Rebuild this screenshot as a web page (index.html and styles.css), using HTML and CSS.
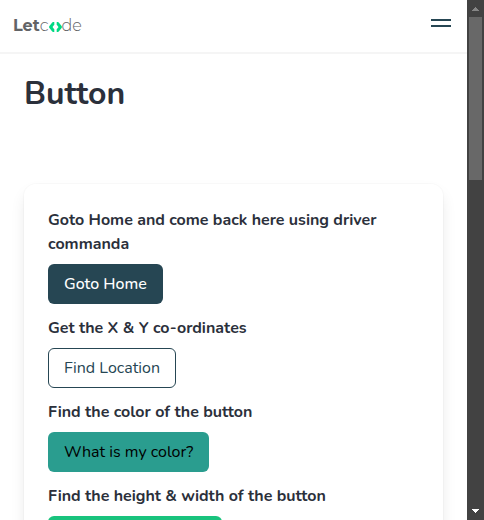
FILE: index.html
```html
<!DOCTYPE html>
<html lang="en">
<head>
<meta charset="utf-8">
<meta name="viewport" content="width=device-width, initial-scale=1">
<title>Button</title>
<link rel="stylesheet" href="styles.css">
</head>
<body>
<div class="page">
  <nav class="navbar">
    <a class="brand" href="#" aria-label="Letcode"><b>Let</b><span>c</span><svg class="brand-mark" viewBox="0 0 13 10" aria-hidden="true"><path d="M5.300 1.600H4.200L1.600 5 4.200 8.400H5.300M7.700 1.600H8.800L11.400 5 8.800 8.400H7.700"/></svg><span>de</span></a>
    <button class="burger" type="button" aria-label="Menu"><i></i><i></i></button>
  </nav>
  <main class="content">
    <h1 class="title">Button</h1>
    <section class="card">
      <div class="field">
        <label class="label" for="home">Goto Home and come back here using driver commanda</label>
        <button class="button button-primary" id="home" type="button">Goto Home</button>
      </div>
      <div class="field">
        <label class="label" for="position">Get the X &amp; Y co-ordinates</label>
        <button class="button button-outlined" id="position" type="button">Find Location</button>
      </div>
      <div class="field">
        <label class="label" for="color">Find the color of the button</label>
        <button class="button button-teal" id="color" type="button">What is my color?</button>
      </div>
      <div class="field">
        <label class="label" for="property">Find the height &amp; width of the button</label>
        <button class="button button-success" id="property" type="button">How tall &amp; fat I am?</button>
      </div>
    </section>
  </main>
</div>
<div class="scrollbar" aria-hidden="true">
  <svg class="arrow arrow-up" viewBox="0 0 7 4"><path d="M0 4V3H1V2H2V1H3V0H4V1H5V2H6V3H7V4Z"/></svg>
  <div class="track"><div class="thumb"></div></div>
  <svg class="arrow arrow-down" viewBox="0 0 7 4"><path d="M0 0V1H1V2H2V3H3V4H4V3H5V2H6V1H7V0Z"/></svg>
</div>
</body>
</html>
```
FILE: styles.css
```css
* {
  box-sizing: border-box;
}

body {
  display: flex;
  height: 100vh;
  margin: 0;
  overflow: hidden;
  background: #fff;
  color: #2b303b;
  font: 16px/24px Nunito, "Open Sans", sans-serif;
}

.page {
  flex: 1;
  min-width: 0;
  overflow: hidden;
}

.navbar {
  display: flex;
  align-items: center;
  justify-content: space-between;
  height: 52px;
  padding: 0 16px 0 13px;
  box-shadow: 0 2px 0 #f5f5f5;
}

.brand {
  display: flex;
  align-items: center;
  color: #626366;
  font: 300 16px/24px Montserrat, Lato, sans-serif;
  text-decoration: none;
}

.brand b {
  font-weight: 700;
}

.brand-mark {
  width: 13px;
  height: 10px;
  margin-top: 2px;
  fill: none;
  stroke: #00d983;
  stroke-width: 3;
  stroke-linejoin: round;
}

.burger {
  display: grid;
  gap: 4px;
  width: 20px;
  margin: 0 0 6px;
  padding: 0;
  border: 0;
  background: none;
}

.burger i {
  height: 2px;
  background: #264653;
}

.content {
  padding: 24px;
}

.title {
  margin: 0 0 72px;
  font-size: 32px;
  line-height: 36px;
  font-weight: 700;
}

.card {
  display: grid;
  gap: 12px;
  padding: 24px;
  border-radius: 12px;
  box-shadow: 0 8px 16px -2px rgba(10, 10, 10, 0.1), 0 0 0 1px rgba(10, 10, 10, 0.02);
}

.label {
  display: block;
  margin-bottom: 8px;
  font-weight: 700;
}

.button {
  display: block;
  height: 40px;
  padding: 0 15px;
  border: 1px solid transparent;
  border-radius: 6px;
  font: inherit;
}

.button-primary {
  background: #264653;
  color: #fff;
  font-weight: 500;
}

.button-outlined {
  border-color: #264653;
  background: #fff;
  color: #264653;
}

.button-teal {
  background: #2a9d8f;
  color: #000;
}

.button-success {
  background: #19c37d;
  color: #fff;
}

.scrollbar {
  display: flex;
  flex-direction: column;
  align-items: center;
  width: 17px;
  padding: 7px 2px;
  background: #424242;
}

.arrow {
  flex: none;
  width: 7px;
  height: 4px;
  shape-rendering: crispEdges;
}

.arrow-up {
  fill: #868686;
}

.arrow-down {
  fill: #fff;
}

.track {
  flex: 1;
  width: 13px;
  padding: 6px 0;
}

.thumb {
  height: 163px;
  background: #686868;
}
```
